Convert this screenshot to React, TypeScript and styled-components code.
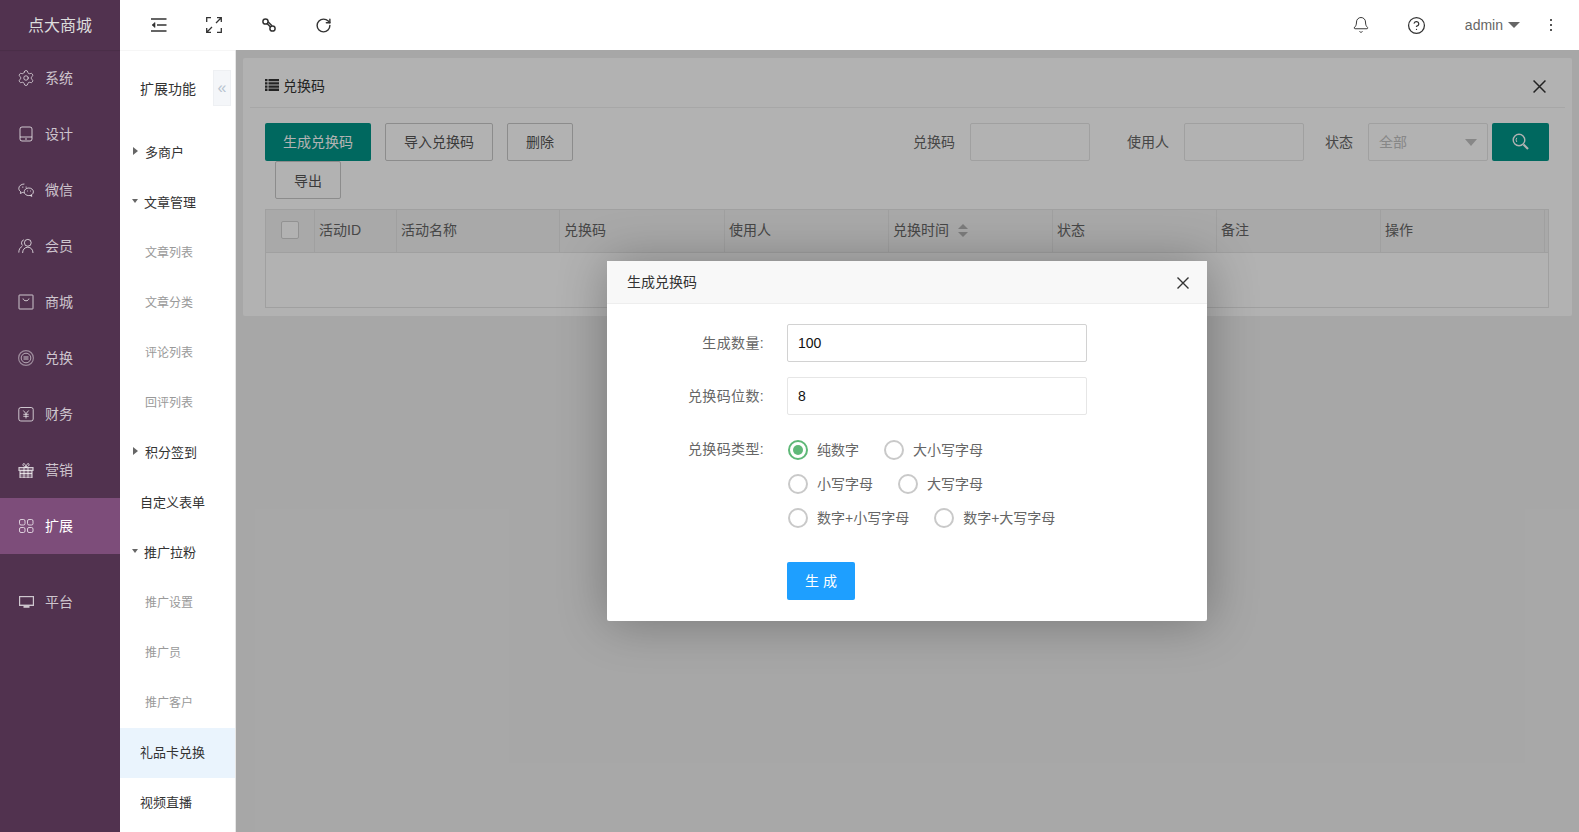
import React from 'react';
import styled, { createGlobalStyle } from 'styled-components';
import { Bell, CircleHelp, RotateCw, Settings } from 'lucide-react';

const GlobalStyle = createGlobalStyle`
  html, body {
    margin: 0;
    height: 100%;
    overflow: hidden;
  }
  body {
    font-family: "Liberation Sans", "Noto Sans CJK SC", sans-serif;
    font-size: 14px;
    color: #666;
    background: #fff;
  }
  * {
    box-sizing: border-box;
  }
`;

const Svg = ({ size = 16, children }: { size?: number; children: React.ReactNode }) => (
  <svg width={size} height={size} viewBox="0 0 16 16" fill="none" stroke="currentColor" strokeWidth="1">
    {children}
  </svg>
);

const sideItems: { label: string; icon: React.ReactNode; active?: boolean; gap?: boolean }[] = [
  { label: '系统', icon: <GearIcon size={18} strokeWidth={1.2} /> },
  {
    label: '设计',
    icon: (
      <Svg>
        <rect x="2" y="1" width="12" height="14" rx="2" />
        <path d="M2 11h12M7 13h2" />
      </Svg>
    ),
  },
  {
    label: '微信',
    icon: (
      <Svg>
        <path d="M6.4 2C3.4 2 .8 3.900.8 6.400c0 1.400.8 2.600 2 3.400l-.4 1.700 2-1c.5.100 1 .2 1.400.2" />
        <ellipse cx="10.800" cy="9.800" rx="4.600" ry="3.800" />
        <path d="M4.300 5.200h1M7.600 5.200h1M9 9h.8M12 9h.8" strokeWidth="1.200" />
        <path d="M13.400 13l.5 1.400-1.800-.9" />
      </Svg>
    ),
  },
  {
    label: '会员',
    icon: (
      <Svg>
        <circle cx="9.800" cy="4.800" r="3.400" />
        <path d="M4.600 15c0-3.400 2.200-5.800 5.200-5.800S15 11.600 15 15" />
        <path d="M5.800 1.800a3.400 3.400 0 0 0-1.200 5.700M4.200 8.400C2.200 9.200.8 11.400.8 14.600" />
      </Svg>
    ),
  },
  {
    label: '商城',
    icon: (
      <Svg>
        <rect x="1" y="1" width="14" height="14" rx=".5" />
        <path d="M5 4.500c.5 3 5.500 3 6 0" />
      </Svg>
    ),
  },
  {
    label: '兑换',
    icon: (
      <Svg>
        <circle cx="8" cy="8" r="7.400" strokeOpacity=".6" strokeWidth="1.200" />
        <circle cx="8" cy="8" r="4.800" strokeOpacity=".8" />
        <path d="M5.500 7h5M5.500 9h5" />
      </Svg>
    ),
  },
  {
    label: '财务',
    icon: (
      <Svg>
        <rect x=".8" y="1.500" width="14.400" height="13.500" rx="2" />
        <path d="M5.300 4.500 8 7.700l2.700-3.200M8 7.700V12.500M5.300 8.300h5.400M5.300 10.300h5.400" />
      </Svg>
    ),
  },
  {
    label: '营销',
    icon: (
      <Svg>
        <path d="M1 5.500h14v3H1zM2 8.500h12V16H2z" fill="currentColor" fillOpacity=".35" strokeWidth="1.200" />
        <path d="M6 5.500V16M10 5.500V16M2 11.500h12" />
        <path d="M8 5.300C6 4.800 4.600 3.600 5 2.200c.5-1.300 2.300-.9 3 3.100 .7-4 2.500-4.400 3-3.100.4 1.400-1 2.600-3 3.100z" />
      </Svg>
    ),
  },
  {
    label: '扩展',
    active: true,
    icon: (
      <Svg>
        <rect x="1.500" y="1.500" width="5.500" height="5.500" rx="1.500" />
        <rect x="9.500" y="1.500" width="5.500" height="5.500" rx="1.500" />
        <rect x="1.500" y="9.500" width="5.500" height="5" rx="1.500" />
        <rect x="9.500" y="9.500" width="5.500" height="5" rx="1.500" />
      </Svg>
    ),
  },
  {
    label: '平台',
    gap: true,
    icon: (
      <Svg>
        <path d="M1 2h15v10H1z" fill="currentColor" stroke="none" />
        <path d="M2.200 3.200h12.600v7.400H2.200z" fill="#51324f" stroke="none" />
        <path d="M5.500 12h6v1.800h-6z" fill="currentColor" stroke="none" />
      </Svg>
    ),
  },
];

type MenuKind = 'open' | 'closed' | 'plain' | 'child';

const menuItems: { label: string; kind: MenuKind; active?: boolean }[] = [
  { label: '多商户', kind: 'closed' },
  { label: '文章管理', kind: 'open' },
  { label: '文章列表', kind: 'child' },
  { label: '文章分类', kind: 'child' },
  { label: '评论列表', kind: 'child' },
  { label: '回评列表', kind: 'child' },
  { label: '积分签到', kind: 'closed' },
  { label: '自定义表单', kind: 'plain' },
  { label: '推广拉粉', kind: 'open' },
  { label: '推广设置', kind: 'child' },
  { label: '推广员', kind: 'child' },
  { label: '推广客户', kind: 'child' },
  { label: '礼品卡兑换', kind: 'plain', active: true },
  { label: '视频直播', kind: 'plain' },
];

const columns = ['活动ID', '活动名称', '兑换码', '使用人', '兑换时间', '状态', '备注', '操作'];

const radioRows = [
  [
    { label: '纯数字', checked: true },
    { label: '大小写字母' },
  ],
  [{ label: '小写字母' }, { label: '大写字母' }],
  [{ label: '数字+小写字母' }, { label: '数字+大写字母' }],
];

function GearIcon(props: { size: number; strokeWidth: number }) {
  return <Settings {...props} style={{ margin: -1 }} />;
}

const CloseIcon = ({ size = 12 }: { size?: number }) => (
  <svg width={size} height={size} viewBox="0 0 12 12" fill="none" stroke="currentColor" strokeWidth="1.400">
    <path d="M.5.500l11 11M11.500.500l-11 11" />
  </svg>
);

const App = () => {
  return (
    <Page>
      <GlobalStyle />
      <Sidebar>
        <Logo>点大商城</Logo>
        {sideItems.map((item) => (
          <SideItem key={item.label} $active={item.active} $gap={item.gap}>
            <SideIcon>{item.icon}</SideIcon>
            <SideLabel>{item.label}</SideLabel>
          </SideItem>
        ))}
      </Sidebar>
      <Main>
        <Topbar>
          <TopGroup>
            <TopIcon>
              <svg width="16" height="14" viewBox="0 0 16 14" fill="none" stroke="currentColor" strokeWidth="1.400">
                <path d="M0 1h15.500M6 7h9.500M0 13h15.500" />
                <path d="M4 4.500 1 7l3 2.500z" fill="currentColor" strokeWidth=".6" />
              </svg>
            </TopIcon>
            <TopIcon>
              <svg width="16" height="16" viewBox="0 0 16 16" fill="none" stroke="currentColor" strokeWidth="1.300">
                <path d="M5 .700H.700V5M11 15.300h4.300V11" />
                <path d="M10 6l5-5M11 .700h4.300V5M6 10l-5 5M5 15.300H.700V11" />
              </svg>
            </TopIcon>
            <TopIcon>
              <svg width="14" height="14" viewBox="0 0 14 14" fill="none" stroke="currentColor" strokeWidth="1.500">
                <circle cx="3.500" cy="3.500" r="2.600" />
                <circle cx="10.500" cy="10.500" r="2.600" />
                <path d="M5 5.500l3.500 3.500M6 3.800l4 4" />
              </svg>
            </TopIcon>
            <TopIcon>
              <RotateCw size={17} strokeWidth={2} />
            </TopIcon>
          </TopGroup>
          <TopGroup>
            <TopIcon $wide>
              <Bell size={18} strokeWidth={1.300} />
            </TopIcon>
            <TopIcon $wide>
              <CircleHelp size={19} strokeWidth={1.600} />
            </TopIcon>
            <UserMenu>
              admin
              <UserCaret />
            </UserMenu>
            <MoreButton>
              <MoreDot />
              <MoreDot />
              <MoreDot />
            </MoreButton>
          </TopGroup>
        </Topbar>
        <Workspace>
          <SubMenu>
            <SubHeader>
              <SubTitle>扩展功能</SubTitle>
              <Collapse>«</Collapse>
            </SubHeader>
            {menuItems.map((item) => (
              <MenuRow key={item.label} $kind={item.kind} $active={item.active}>
                {item.kind === 'open' && <CaretDown />}
                {item.kind === 'closed' && <CaretRight />}
                {item.label}
              </MenuRow>
            ))}
          </SubMenu>
          <Content>
            <Card>
              <CardHeader>
                <CardTitle>
                  <svg width="14" height="12" viewBox="0 0 14 12" fill="currentColor">
                    <path d="M0 0h2.500v2.300H0zM3.500 0H14v2.300H3.500zM0 3.200h2.500v2.300H0zM3.500 3.200H14v2.300H3.500zM0 6.400h2.500v2.300H0zM3.500 6.400H14v2.300H3.500zM0 9.600h2.500V12H0zM3.500 9.600H14V12H3.500z" />
                  </svg>
                  兑换码
                </CardTitle>
                <CardClose>
                  <CloseIcon size={13} />
                </CardClose>
              </CardHeader>
              <CardBody>
                <Toolbar>
                  <ButtonGroup>
                    <PrimaryButton>生成兑换码</PrimaryButton>
                    <OutlineButton>导入兑换码</OutlineButton>
                    <OutlineButton>删除</OutlineButton>
                    <ExportButton>导出</ExportButton>
                  </ButtonGroup>
                  <Filters>
                    <FilterLabel>兑换码</FilterLabel>
                    <FilterInput />
                    <FilterLabel $gap={37}>使用人</FilterLabel>
                    <FilterInput />
                    <FilterLabel $gap={21}>状态</FilterLabel>
                    <FilterSelect>
                      全部
                      <SelectCaret />
                    </FilterSelect>
                    <SearchButton>
                      <svg width="18" height="18" viewBox="0 0 18 18" fill="none" stroke="currentColor">
                        <circle cx="7" cy="7" r="5.800" strokeWidth="1.400" />
                        <path d="M4.800 4.800a3.500 3.500 0 0 0 0 4.200" strokeWidth="1" />
                        <path d="M11.500 11.500l4.500 4.500" strokeWidth="2.200" />
                      </svg>
                    </SearchButton>
                  </Filters>
                </Toolbar>
                <Table>
                  <HeadRow>
                    <HeadCell $center>
                      <Checkbox />
                    </HeadCell>
                    {columns.map((name) => (
                      <HeadCell key={name}>
                        {name}
                        {name === '兑换时间' && (
                          <Sort>
                            <SortUp />
                            <SortDown />
                          </Sort>
                        )}
                      </HeadCell>
                    ))}
                  </HeadRow>
                  <EmptyBody />
                </Table>
              </CardBody>
            </Card>
            <Overlay>
              <Modal>
                <ModalHeader>
                  生成兑换码
                  <ModalClose>
                    <CloseIcon size={12} />
                  </ModalClose>
                </ModalHeader>
                <ModalBody>
                  <FormRow>
                    <FormLabel>生成数量:</FormLabel>
                    <TextInput $focused value="100" readOnly />
                  </FormRow>
                  <FormRow>
                    <FormLabel>兑换码位数:</FormLabel>
                    <TextInput value="8" readOnly />
                  </FormRow>
                  <RadioSection>
                    <RadioLabel>兑换码类型:</RadioLabel>
                    <RadioRows>
                      {radioRows.map((row, i) => (
                        <RadioRow key={i}>
                          {row.map((radio) => (
                            <Radio key={radio.label}>
                              <RadioCircle $checked={radio.checked} />
                              <RadioText>{radio.label}</RadioText>
                            </Radio>
                          ))}
                        </RadioRow>
                      ))}
                    </RadioRows>
                  </RadioSection>
                  <SubmitRow>
                    <SubmitButton>生 成</SubmitButton>
                  </SubmitRow>
                </ModalBody>
              </Modal>
            </Overlay>
          </Content>
        </Workspace>
      </Main>
    </Page>
  );
};

const Page = styled.div`
  display: flex;
  width: 100vw;
  height: 100vh;
  overflow: hidden;
`;
const Sidebar = styled.aside`
  flex: 0 0 120px;
  background: #51324f;
`;
const Logo = styled.div`
  display: flex;
  align-items: center;
  justify-content: center;
  height: 50px;
  padding-bottom: 2px;
  color: #ddd;
  font-size: 16px;
  box-shadow: 0 1px 1px rgba(0, 0, 0, 0.08);
`;
const SideItem = styled.div<{ $active?: boolean; $gap?: boolean }>`
  display: flex;
  align-items: center;
  gap: 11px;
  height: 56px;
  padding-left: 18px;
  margin-top: ${(p) => (p.$gap ? '20px' : '0')};
  color: ${(p) => (p.$active ? '#fff' : 'rgba(255, 255, 255, 0.72)')};
  background: ${(p) => (p.$active ? '#7d4d7a' : 'transparent')};
`;
const SideIcon = styled.span`
  display: flex;
  width: 16px;
  height: 16px;
  color: rgba(255, 255, 255, 0.72);
`;
const SideLabel = styled.span`
  padding-bottom: 2px;
`;
const Main = styled.div`
  display: flex;
  flex: 1;
  flex-direction: column;
  min-width: 0;
`;
const Topbar = styled.header`
  position: relative;
  z-index: 2;
  display: flex;
  flex: 0 0 50px;
  align-items: center;
  justify-content: space-between;
  padding: 0 8px 0 11px;
  background: #fff;
  color: #333;
`;
const TopGroup = styled.div`
  display: flex;
  align-items: center;
  height: 100%;
`;
const TopIcon = styled.div<{ $wide?: boolean }>`
  display: flex;
  align-items: center;
  justify-content: center;
  width: ${(p) => (p.$wide ? '56px' : '55px')};
  height: 100%;
`;
const UserMenu = styled.div`
  display: flex;
  align-items: center;
  gap: 5px;
  padding: 0 11px 0 20px;
  color: #666;
`;
const UserCaret = styled.i`
  width: 0;
  height: 0;
  border: 6px solid transparent;
  border-top-color: #666;
  border-bottom-width: 0;
`;
const MoreButton = styled.div`
  display: flex;
  flex-direction: column;
  align-items: center;
  gap: 3px;
  width: 40px;
`;
const MoreDot = styled.i`
  width: 2px;
  height: 2px;
  background: #555;
`;
const Workspace = styled.div`
  display: flex;
  flex: 1;
  min-height: 0;
`;
const SubMenu = styled.nav`
  flex: 0 0 116px;
  overflow: hidden;
  background: #fff;
  border-right: 1px solid #e6e6e6;
  box-shadow: inset 0 1px 0 #f6f6f6;
`;
const SubHeader = styled.div`
  display: flex;
  align-items: flex-start;
  justify-content: space-between;
  height: 78px;
  padding: 20px 4px 0 20px;
`;
const SubTitle = styled.div`
  color: #333;
  line-height: 38px;
`;
const Collapse = styled.div`
  width: 18px;
  height: 36px;
  color: #b8c4d0;
  font-size: 16px;
  line-height: 34px;
  text-align: center;
  background: #f4f6f9;
  border: 1px solid #eef0f3;
`;
const MenuRow = styled.div<{ $kind: MenuKind; $active?: boolean }>`
  display: flex;
  align-items: center;
  height: 50px;
  padding-left: ${(p) => (p.$kind === 'plain' ? '20px' : p.$kind === 'child' ? '25px' : '12px')};
  padding-bottom: 4px;
  color: ${(p) => (p.$kind === 'child' ? '#999' : '#333')};
  font-size: ${(p) => (p.$kind === 'child' ? '12px' : '13px')};
  background: ${(p) => (p.$active ? '#eaf4fd' : 'transparent')};
`;
const CaretDown = styled.i`
  width: 0;
  height: 0;
  margin-right: 6px;
  border: 3.5px solid transparent;
  border-top: 4px solid #666;
  border-bottom-width: 0;
`;
const CaretRight = styled.i`
  width: 0;
  height: 0;
  margin: 0 7px 0 1px;
  border: 4px solid transparent;
  border-left: 5px solid #666;
  border-right-width: 0;
`;
const Content = styled.main`
  position: relative;
  flex: 1;
  min-width: 0;
  padding: 8px 7px;
  background: #f0f0f0;
`;
const Card = styled.section`
  background: #fff;
  border-radius: 2px;
`;
const CardHeader = styled.div`
  display: flex;
  align-items: center;
  justify-content: space-between;
  height: 50px;
  margin: 0 7px;
  padding: 0 19px 0 15px;
  border-bottom: 1px solid #f0f0f0;
`;
const CardTitle = styled.div`
  display: flex;
  align-items: center;
  gap: 4px;
  margin-top: 4px;
  color: #333;
`;
const CardClose = styled.div`
  display: flex;
  margin-top: 8px;
  color: #333;
`;
const CardBody = styled.div`
  padding: 15px 23px 8px 22px;
`;
const Toolbar = styled.div`
  display: flex;
  align-items: flex-start;
  justify-content: space-between;
  margin-bottom: 10px;
`;
const ButtonGroup = styled.div`
  display: flex;
  flex-wrap: wrap;
  column-gap: 14px;
  width: 330px;
`;
const PrimaryButton = styled.button`
  height: 38px;
  padding: 0 18px 2px;
  color: #fff;
  font: inherit;
  background: #009688;
  border: 0;
  border-radius: 2px;
`;
const OutlineButton = styled.button`
  height: 38px;
  padding: 0 18px 2px;
  color: #555;
  font: inherit;
  background: #fff;
  border: 1px solid #c9c9c9;
  border-radius: 2px;
`;
const ExportButton = styled(OutlineButton)`
  margin-left: 10px;
  padding-bottom: 0;
`;
const Filters = styled.div`
  display: flex;
  align-items: center;
`;
const FilterLabel = styled.label<{ $gap?: number }>`
  margin-left: ${(p) => p.$gap || 0}px;
  margin-right: 15px;
  padding-bottom: 2px;
  color: #666;
`;
const FilterInput = styled.input`
  width: 120px;
  height: 38px;
  background: #fff;
  border: 1px solid #e6e6e6;
  border-radius: 2px;
`;
const FilterSelect = styled.div`
  display: flex;
  align-items: center;
  justify-content: space-between;
  width: 120px;
  height: 38px;
  padding: 0 10px 2px;
  color: #c2c2c2;
  background: #fff;
  border: 1px solid #e6e6e6;
  border-radius: 2px;
`;
const SelectCaret = styled.i`
  width: 0;
  height: 0;
  margin-top: 2px;
  border: 6px solid transparent;
  border-top: 7px solid #c2c2c2;
  border-bottom-width: 0;
`;
const SearchButton = styled.button`
  display: flex;
  align-items: center;
  justify-content: center;
  width: 57px;
  height: 38px;
  margin-left: 4px;
  color: #fff;
  background: #009688;
  border: 0;
  border-radius: 2px;
`;
const Table = styled.div`
  border: 1px solid #e6e6e6;
`;
const HeadRow = styled.div`
  display: grid;
  grid-template-columns: 49px 82px 163px 165px repeat(5, 164px);
  height: 43px;
  background: #f2f2f2;
  border-bottom: 1px solid #e6e6e6;
`;
const HeadCell = styled.div<{ $center?: boolean }>`
  display: flex;
  align-items: center;
  justify-content: ${(p) => (p.$center ? 'center' : 'flex-start')};
  padding-left: ${(p) => (p.$center ? '0' : '4px')};
  padding-bottom: ${(p) => (p.$center ? '2px' : '4px')};
  color: #666;
  border-right: 1px solid #e6e6e6;
`;
const Checkbox = styled.div`
  width: 18px;
  height: 18px;
  background: #fff;
  border: 1px solid #d2d2d2;
  border-radius: 2px;
`;
const Sort = styled.span`
  display: flex;
  flex-direction: column;
  gap: 3px;
  margin: 2px 0 0 9px;
`;
const SortUp = styled.i`
  width: 0;
  height: 0;
  border: 5px solid transparent;
  border-bottom-color: #b2b2b2;
  border-top-width: 0;
`;
const SortDown = styled.i`
  width: 0;
  height: 0;
  border: 5px solid transparent;
  border-top-color: #b2b2b2;
  border-bottom-width: 0;
`;
const EmptyBody = styled.div`
  height: 54px;
`;
const Overlay = styled.div`
  position: absolute;
  inset: 0;
  display: flex;
  justify-content: center;
  align-items: flex-start;
  padding: 211px 1px 0 0;
  background: rgba(0, 0, 0, 0.3);
`;
const Modal = styled.div`
  width: 600px;
  height: 360px;
  background: #fff;
  border-radius: 2px;
  box-shadow: 1px 1px 50px rgba(0, 0, 0, 0.3);
`;
const ModalHeader = styled.div`
  display: flex;
  align-items: center;
  justify-content: space-between;
  height: 43px;
  padding: 0 18px 2px 20px;
  color: #333;
  background: #f8f8f8;
  border-bottom: 1px solid #eee;
`;
const ModalClose = styled.span`
  display: flex;
  margin-top: 4px;
  color: #333;
`;
const ModalBody = styled.div`
  padding-top: 20px;
`;
const FormRow = styled.div`
  display: flex;
  align-items: center;
  margin-bottom: 15px;
`;
const FormLabel = styled.label`
  width: 157px;
  margin-right: 23px;
  padding-bottom: 2px;
  color: #666;
  letter-spacing: 0.35px;
  text-align: right;
`;
const TextInput = styled.input<{ $focused?: boolean }>`
  width: 300px;
  height: 38px;
  padding: 0 10px;
  color: #111;
  font: inherit;
  background: #fff;
  border: 1px solid ${(p) => (p.$focused ? '#d2d2d2' : '#e6e6e6')};
  border-radius: 2px;
  outline: 0;
`;
const RadioSection = styled.div`
  display: flex;
  margin-top: 18px;
`;
const RadioLabel = styled(FormLabel)`
  padding-bottom: 0;
  line-height: 32px;
`;
const RadioRows = styled.div`
  display: flex;
  flex-direction: column;
`;
const RadioRow = styled.div`
  display: flex;
  align-items: center;
  height: 34px;
  padding-left: 1px;
`;
const Radio = styled.label`
  display: flex;
  align-items: center;
  gap: 9px;
  margin-right: 25px;
  color: #666;
`;
const RadioText = styled.span`
  padding-bottom: 2px;
`;
const RadioCircle = styled.span<{ $checked?: boolean }>`
  display: flex;
  align-items: center;
  justify-content: center;
  width: 20px;
  height: 20px;
  border: 2px solid ${(p) => (p.$checked ? '#5fb878' : '#c9c9c9')};
  border-radius: 50%;
  &::after {
    content: '';
    display: ${(p) => (p.$checked ? 'block' : 'none')};
    width: 10px;
    height: 10px;
    background: #5fb878;
    border-radius: 50%;
  }
`;
const SubmitRow = styled.div`
  margin: 27px 0 0 180px;
`;
const SubmitButton = styled.button`
  width: 68px;
  height: 38px;
  padding: 0 0 2px;
  color: #fff;
  font: inherit;
  background: #1e9fff;
  border: 0;
  border-radius: 2px;
`;

export default App;
